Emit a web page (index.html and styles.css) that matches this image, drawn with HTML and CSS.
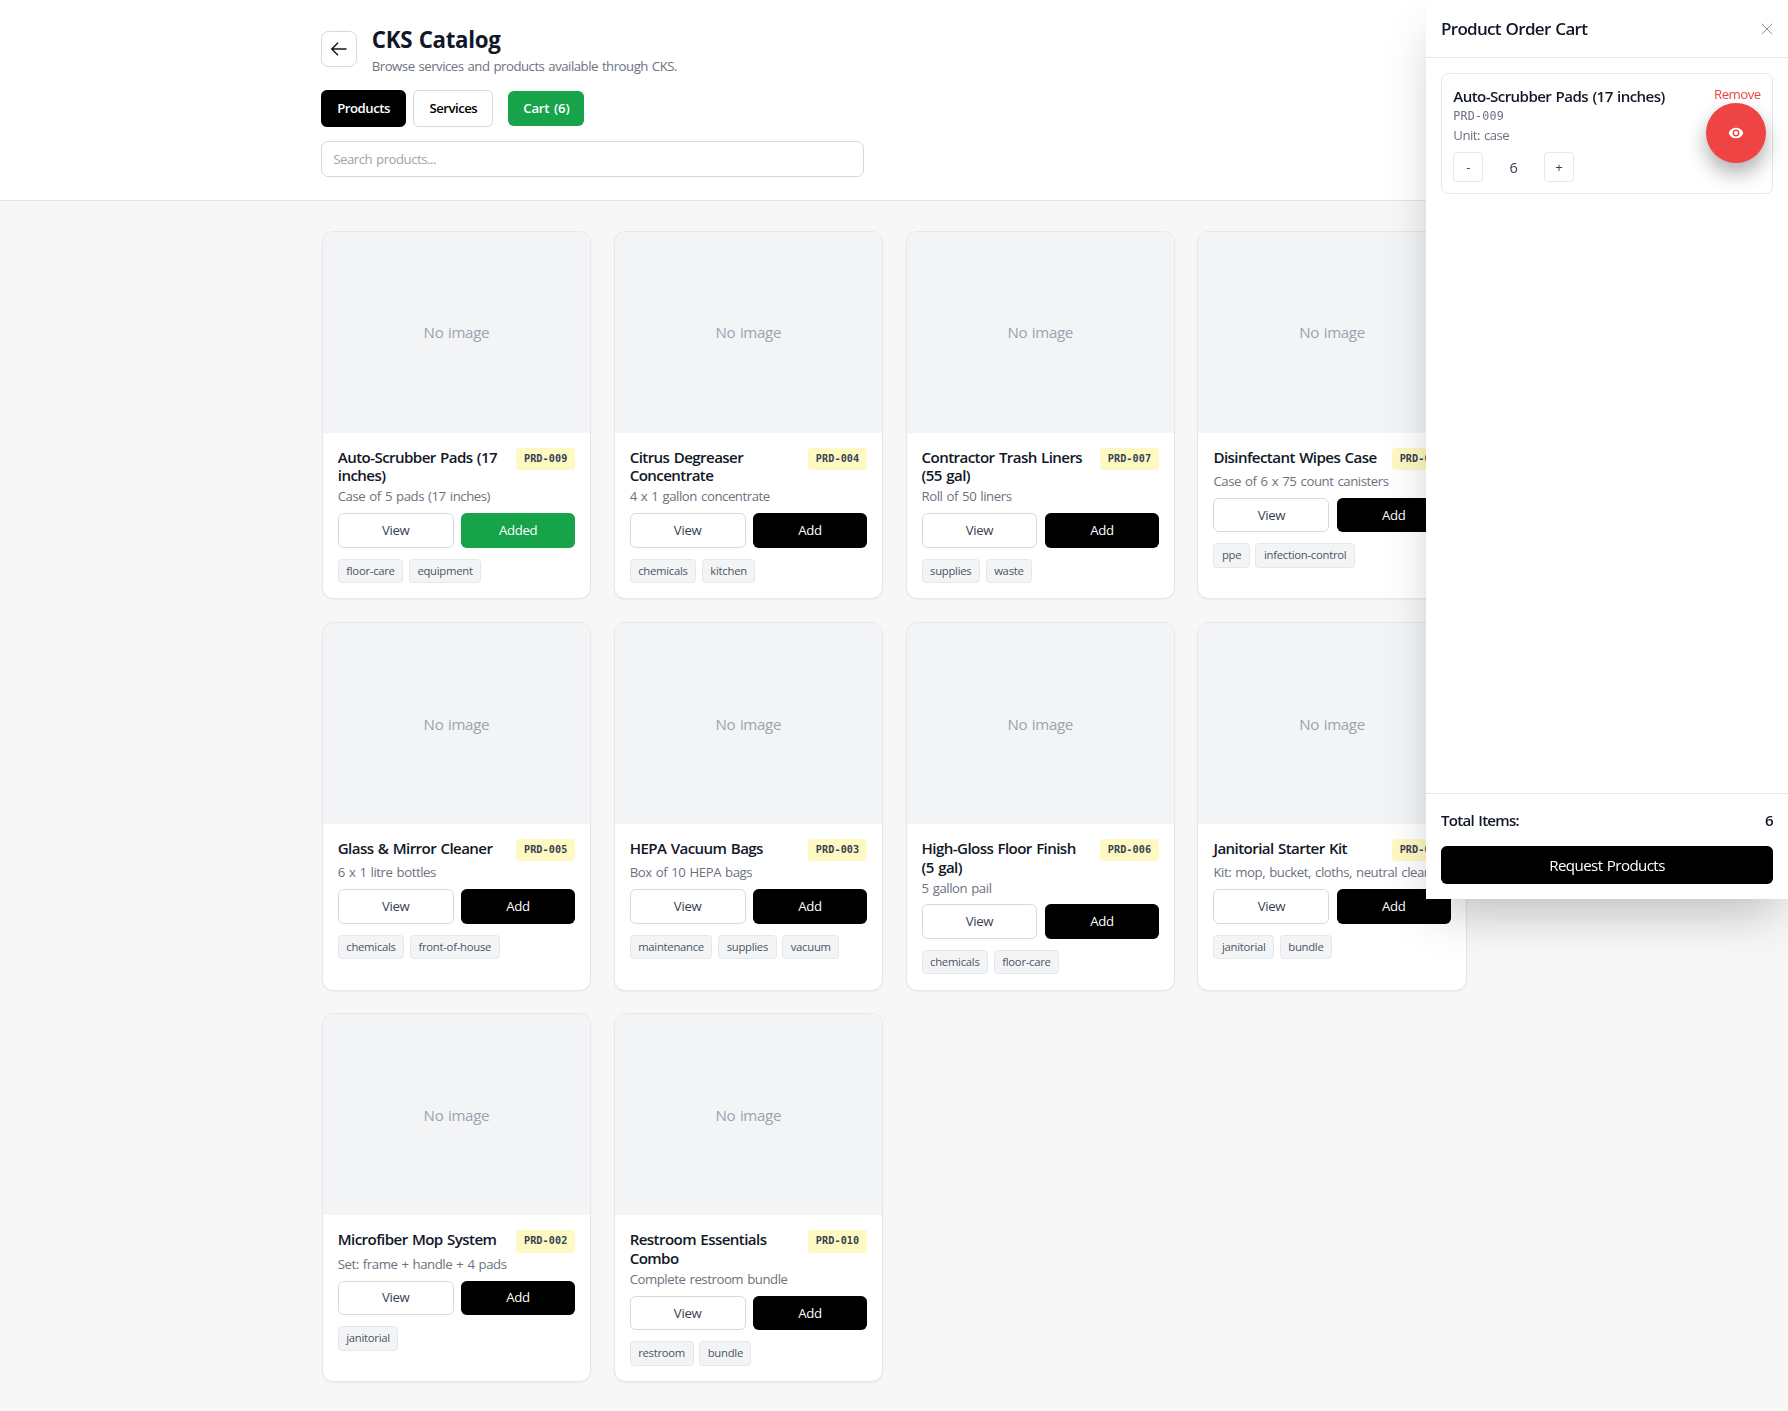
FILE: index.html
```html
<!DOCTYPE html>
<html lang="en">
<head>
<meta charset="utf-8">
<title>CKS Catalog</title>
<link rel="stylesheet" href="styles.css">
</head>
<body>
<header class="top">
  <div class="container">
    <div class="heading">
      <button class="back" aria-label="Back"><svg viewBox="0 0 18 18" width="18" height="18"><path d="M16.5 9H2M8 2.8L1.8 9L8 15.2"/></svg></button>
      <div>
        <h1>CKS Catalog</h1>
        <p class="subtitle">Browse services and products available through CKS.</p>
      </div>
    </div>
    <div class="tabs">
      <button class="tab active">Products</button>
      <button class="tab">Services</button>
      <button class="cart-btn">Cart (6)</button>
    </div>
    <input class="search" type="text" placeholder="Search products...">
  </div>
</header>
<main class="container grid">
  <article class="card"><div class="image">No image</div><div class="info"><div class="name"><h2>Auto-Scrubber Pads (17 inches)</h2><span class="code">PRD-009</span></div><p class="desc">Case of 5 pads (17 inches)</p><div class="actions"><button class="view">View</button><button class="add added">Added</button></div><div class="tags"><span>floor-care</span><span>equipment</span></div></div></article>
  <article class="card"><div class="image">No image</div><div class="info"><div class="name"><h2>Citrus Degreaser Concentrate</h2><span class="code">PRD-004</span></div><p class="desc">4 x 1 gallon concentrate</p><div class="actions"><button class="view">View</button><button class="add">Add</button></div><div class="tags"><span>chemicals</span><span>kitchen</span></div></div></article>
  <article class="card"><div class="image">No image</div><div class="info"><div class="name"><h2>Contractor Trash Liners (55 gal)</h2><span class="code">PRD-007</span></div><p class="desc">Roll of 50 liners</p><div class="actions"><button class="view">View</button><button class="add">Add</button></div><div class="tags"><span>supplies</span><span>waste</span></div></div></article>
  <article class="card"><div class="image">No image</div><div class="info"><div class="name"><h2>Disinfectant Wipes Case</h2><span class="code">PRD-008</span></div><p class="desc">Case of 6 x 75 count canisters</p><div class="actions"><button class="view">View</button><button class="add">Add</button></div><div class="tags"><span>ppe</span><span>infection-control</span></div></div></article>
  <article class="card"><div class="image">No image</div><div class="info"><div class="name"><h2>Glass &amp; Mirror Cleaner</h2><span class="code">PRD-005</span></div><p class="desc">6 x 1 litre bottles</p><div class="actions"><button class="view">View</button><button class="add">Add</button></div><div class="tags"><span>chemicals</span><span>front-of-house</span></div></div></article>
  <article class="card"><div class="image">No image</div><div class="info"><div class="name"><h2>HEPA Vacuum Bags</h2><span class="code">PRD-003</span></div><p class="desc">Box of 10 HEPA bags</p><div class="actions"><button class="view">View</button><button class="add">Add</button></div><div class="tags"><span>maintenance</span><span>supplies</span><span>vacuum</span></div></div></article>
  <article class="card"><div class="image">No image</div><div class="info"><div class="name"><h2>High-Gloss Floor Finish (5 gal)</h2><span class="code">PRD-006</span></div><p class="desc">5 gallon pail</p><div class="actions"><button class="view">View</button><button class="add">Add</button></div><div class="tags"><span>chemicals</span><span>floor-care</span></div></div></article>
  <article class="card"><div class="image">No image</div><div class="info"><div class="name"><h2>Janitorial Starter Kit</h2><span class="code">PRD-001</span></div><p class="desc">Kit: mop, bucket, cloths, neutral cleaner</p><div class="actions"><button class="view">View</button><button class="add">Add</button></div><div class="tags"><span>janitorial</span><span>bundle</span></div></div></article>
  <article class="card"><div class="image">No image</div><div class="info"><div class="name"><h2>Microfiber Mop System</h2><span class="code">PRD-002</span></div><p class="desc">Set: frame + handle + 4 pads</p><div class="actions"><button class="view">View</button><button class="add">Add</button></div><div class="tags"><span>janitorial</span></div></div></article>
  <article class="card"><div class="image">No image</div><div class="info"><div class="name"><h2>Restroom Essentials Combo</h2><span class="code">PRD-010</span></div><p class="desc">Complete restroom bundle</p><div class="actions"><button class="view">View</button><button class="add">Add</button></div><div class="tags"><span>restroom</span><span>bundle</span></div></div></article>
</main>
<aside class="drawer">
  <div class="drawer-head">
    <h3>Product Order Cart</h3>
    <button class="close" aria-label="Close"><svg viewBox="0 0 12 12" width="12" height="12"><path d="M.7 .7L11.300 11.300M11.300 .7L.7 11.300"/></svg></button>
  </div>
  <div class="drawer-body">
    <div class="item">
      <div class="item-top">
        <div>
          <h4>Auto-Scrubber Pads (17 inches)</h4>
          <p class="item-code">PRD-009</p>
          <p class="item-unit">Unit: case</p>
        </div>
        <button class="remove">Remove</button>
      </div>
      <div class="qty"><button>-</button><span>6</span><button>+</button></div>
    </div>
  </div>
  <div class="drawer-foot">
    <div class="total"><span>Total Items:</span><span>6</span></div>
    <button class="request">Request Products</button>
  </div>
</aside>
<button class="fab" aria-label="Preview"><svg viewBox="0 0 24 24" width="16" height="16"><path fill-rule="evenodd" d="M12 4C7 4 2.7 7.1 1 12c1.700 4.900 6 8 11 8s9.300-3.100 11-8c-1.700-4.900-6-8-11-8zm0 13.200a5.200 5.200 0 1 1 0-10.400 5.200 5.200 0 0 1 0 10.400zM12 9a3 3 0 1 0 0 6 3 3 0 0 0 0-6z"/></svg></button>
</body>
</html>
```
FILE: styles.css
```css
* { box-sizing: border-box; margin: 0; padding: 0; }
body {
  min-height: 1411px;
  background: #f7f7f7;
  color: #111827;
  font-family: "Open Sans", "Noto Sans", sans-serif;
  font-size: 13.2px;
  line-height: 18.9px;
  letter-spacing: -0.33px;
  overflow: hidden;
}
button { font: inherit; letter-spacing: inherit; border: 0; background: none; color: inherit; }
svg { display: block; fill: none; stroke: currentColor; }
.container { width: 1145.5px; margin: 0 auto; }

.top { height: 201px; padding-top: 23px; background: #fff; border-bottom: 1px solid #e3e5e8; }
.heading { display: flex; align-items: center; gap: 14.5px; }
.back {
  display: flex; align-items: center; justify-content: center;
  width: 36px; height: 36px;
  border: 1px solid #d5d9de; border-radius: 7.5px;
}
.back svg { stroke-width: 1.5; }
h1 { padding-top: 1.5px; font-size: 22.3px; line-height: 30.2px; font-weight: 700; letter-spacing: -0.3px; word-spacing: 1px; }
.subtitle { margin-top: 2.2px; color: #6b7280; letter-spacing: -0.49px; word-spacing: 1px; }
.tabs { display: flex; align-items: center; gap: 7.5px; margin-top: 14.5px; font-weight: 600; letter-spacing: -0.5px; }
.tab { height: 36.5px; padding: 0 15px; border: 1px solid #d5d9de; border-radius: 5.7px; color: #000; }
.tab.active { background: #000; border-color: #000; color: #fff; }
.cart-btn { height: 34.5px; margin-left: 7.5px; padding: 0 15px; border-radius: 5.7px; background: #16a34a; color: #fff; letter-spacing: -0.2px; word-spacing: 1.5px; }
.search {
  display: block; width: 543px; height: 36.5px; margin-top: 14px; padding: 0 11px;
  border: 1px solid #d5d9de; border-radius: 7px; background: #fff;
  font: inherit; letter-spacing: -0.48px; word-spacing: 1px;
}
.search::placeholder { color: #9ca3af; }

.grid {
  display: grid; grid-template-columns: repeat(4, 1fr); grid-auto-rows: 368.5px;
  gap: 22.8px 22.6px; padding: 29.9px 0 0 .5px;
}
.card {
  overflow: hidden; background: #fff;
  border: 1px solid #e5e7eb; border-radius: 11.3px;
  box-shadow: 0 1px 2px rgba(0, 0, 0, .05);
}
.image {
  display: flex; align-items: center; justify-content: center;
  height: 201px; background: #f3f4f6; color: #9ca3af; padding-top: 1px;
  font-size: 15.1px; letter-spacing: -0.33px; word-spacing: 1px;
}
.info { padding: 14.7px 15px; }
.name { display: flex; align-items: flex-start; justify-content: space-between; gap: 11.3px; }
h2 { font-size: 15.1px; line-height: 18.9px; font-weight: 600; letter-spacing: -0.58px; word-spacing: 1px; }
.code {
  flex: none; height: 22.6px; padding: 0 7.7px; border-radius: 3.8px;
  background: #fef9c3; color: #374151;
  font: 700 10.2px/22.6px "DejaVu Sans Mono", monospace; letter-spacing: 0.07px;
}
.desc { margin-top: 1.9px; color: #6b7280; letter-spacing: -0.45px; word-spacing: 1.1px; white-space: nowrap; overflow: hidden; }
.actions { display: flex; gap: 7.5px; margin-top: 7px; }
.actions button { flex: 1 1 0; height: 34.5px; padding: 0 11.3px; border-radius: 5.7px; font-weight: 500; }
.view { border: 1px solid #d5d9de; color: #374151; }
.add { background: #000; color: #fff; }
.add.added { background: #16a34a; }
.tags { display: flex; gap: 5.7px; margin-top: 10.9px; }
.tags span {
  padding: 0 7.5px; border: 1px solid #e5e7eb; border-radius: 3.8px;
  background: #f3f4f6; color: #4b5563;
  font-size: 11.3px; line-height: 22.6px; letter-spacing: -0.27px;
}

.drawer {
  position: fixed; top: 0; right: 0; width: 362px; height: 899px;
  display: flex; flex-direction: column; background: #fff;
  box-shadow: 0 23.6px 47px -11.3px rgba(0, 0, 0, .25);
}
.drawer-head {
  display: flex; align-items: center; justify-content: space-between;
  height: 57.5px; padding: 0 15px; border-bottom: 1px solid #e5e7eb;
}
h3 { padding-top: 1.5px; font-size: 17px; font-weight: 600; letter-spacing: -0.69px; word-spacing: 1px; }
.close { color: #8b919b; padding-top: 1px; }
.drawer-body { flex: 1; padding: 15px; }
.item { height: 121.5px; padding: 12px 11.3px; border: 1px solid #e5e7eb; border-radius: 7.5px; }
.item-top { display: flex; align-items: flex-start; justify-content: space-between; }
h4 { font-size: 15.1px; line-height: 21px; font-weight: 600; letter-spacing: -0.58px; word-spacing: 1px; }
.item-code { color: #6b7280; font: 11.7px/18.9px "DejaVu Sans Mono", monospace; letter-spacing: 0.2px; }
.item-unit { padding-top: .6px; color: #6b7280; letter-spacing: -0.5px; word-spacing: 1px; }
.remove { color: #ef4444; letter-spacing: -0.5px; line-height: 16px; }
.qty { display: flex; align-items: center; margin-top: 7.5px; }
.qty button { width: 30px; height: 30px; border: 1px solid #e5e7eb; border-radius: 3.8px; color: #374151; }
.qty span { width: 60.5px; text-align: center; font-size: 14.6px; color: #374151; }
.drawer-foot { padding: 15px; border-top: 1px solid #e5e7eb; font-size: 15.1px; }
.total { display: flex; justify-content: space-between; margin-bottom: 15px; line-height: 22.6px; font-weight: 600; letter-spacing: -0.75px; word-spacing: 1.2px; }
.request { display: block; width: 100%; height: 37.7px; border-radius: 5.7px; background: #000; color: #fff; font-weight: 500; letter-spacing: -0.58px; word-spacing: 1px; }

.fab {
  position: fixed; top: 103px; left: 1706px; width: 60px; height: 60px;
  display: flex; align-items: center; justify-content: center;
  border-radius: 50%; background: #ef4444; color: #fff;
  box-shadow: 0 10px 20px rgba(0, 0, 0, .32);
}
.fab svg { fill: currentColor; stroke: none; }
```
